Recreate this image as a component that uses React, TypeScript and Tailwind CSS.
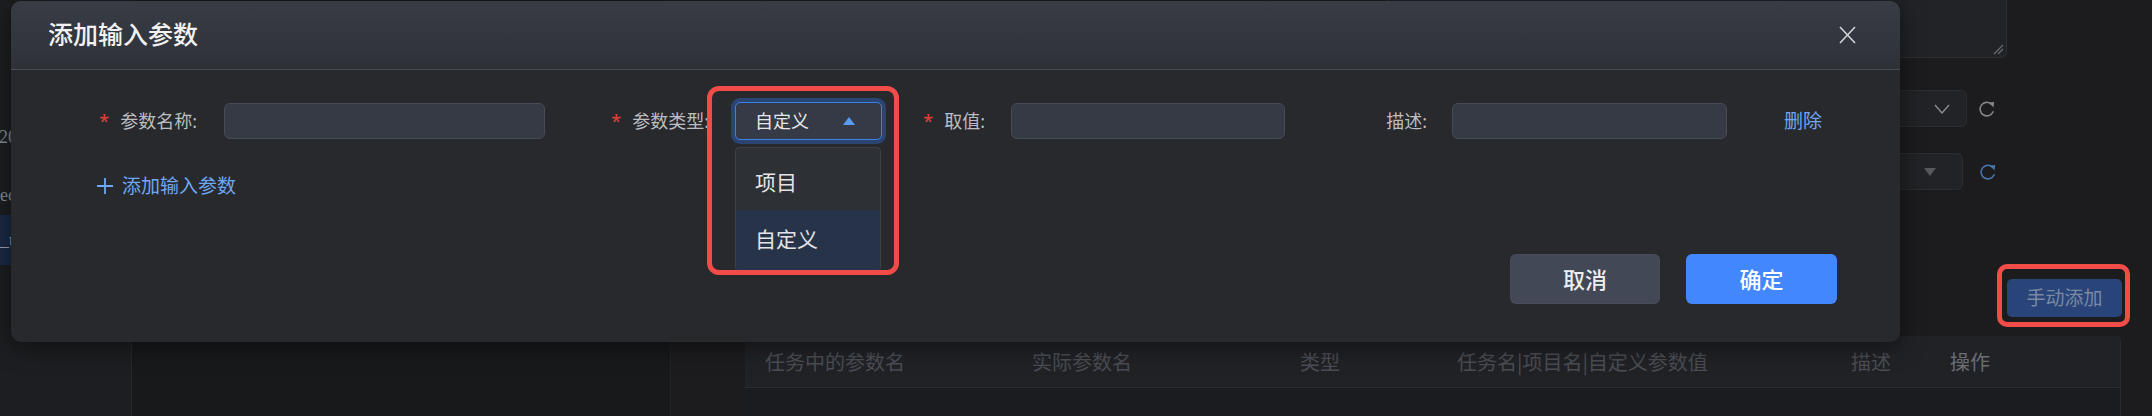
import React from 'react';

const font = "font-['Noto_Sans','Noto_Sans_CJK_SC',sans-serif]";

const Refresh: React.FC<{ color: string }> = ({ color }) => (
  <svg width="18" height="18" viewBox="0 0 16 16" fill="none">
    <path d="M13.4 10.4A6 6 0 1 1 11.9 3.6" stroke={color} strokeWidth="1.4" strokeLinecap="round" />
    <path d="M9.6 2.2L14.4 1.8L13.8 6.6Z" fill={color} />
  </svg>
);

const Label: React.FC<{ text: string; required?: boolean; className: string }> = ({ text, required, className }) => (
  <div className={`flex items-center justify-end text-[18px] text-[#bcbdc0] ${className}`}>
    {required && <span className="mr-[11px] text-[#e8403c]">*</span>}
    <span>{text}</span>
  </div>
);

const Field: React.FC<{ className: string }> = ({ className }) => (
  <div className={`h-[36px] rounded-[6px] border border-[#474b56] bg-[#363a45] ${className}`} />
);

export default function App() {
  return (
    <div className={`relative flex h-[416px] w-[2152px] overflow-hidden bg-[#1c1c1e] ${font}`}>
      {/* page behind the modal */}
      <aside className="flex w-[132px] shrink-0 flex-col border-r border-[#26272a] bg-[#1d1e21] font-['Liberation_Serif',serif] text-[18px] text-[#8a8b8f]">
        <div className="mt-[124px] h-[28px] -ml-[1px]">2023</div>
        <div className="mt-[30px] h-[28px]">edit</div>
        <div className="mt-[5px] flex h-[50px] items-center bg-[#1b2a44] text-[#9aa6ba]">_u</div>
      </aside>
      <div className="w-[539px] shrink-0 border-r border-[#222326] bg-[#18191b]" />
      <main className="flex flex-1 flex-col bg-[#1c1c1e]">
        <div className="flex justify-end pr-[145px]">
          <div className="flex w-[620px] flex-col">
            <div className="relative -mt-[12px] h-[70px] rounded-[6px] border border-[#2d2f33] bg-[#222327]">
              <svg className="absolute bottom-[2px] right-[2px]" width="12" height="12" viewBox="0 0 12 12">
                <path d="M2 11L11 2M6 11L11 6" stroke="#6a6b6f" strokeWidth="1.3" />
              </svg>
            </div>
            <div className="mt-[32px] flex h-[37px] items-center">
              <div className="flex h-full flex-1 items-center justify-end rounded-[6px] border border-[#2b2c30] bg-[#222326] pr-[16px]">
                <svg width="16" height="10" viewBox="0 0 16 10" fill="none">
                  <path d="M1 1L8 9L15 1" stroke="#8b8c90" strokeWidth="1.4" />
                </svg>
              </div>
              <div className="ml-[11px] mr-[11px] flex w-[18px] justify-center">
                <Refresh color="#85868a" />
              </div>
            </div>
            <div className="mt-[26px] flex h-[37px] items-center">
              <div className="flex h-full flex-1 items-center justify-end rounded-[6px] border border-[#2b2c30] bg-[#222326] pr-[26px]">
                <svg width="12" height="8" viewBox="0 0 12 8">
                  <path d="M0 0H12L6 8Z" fill="#58595d" />
                </svg>
              </div>
              <div className="ml-[16px] mr-[10px] flex w-[18px] justify-center">
                <Refresh color="#4b73aa" />
              </div>
            </div>
          </div>
        </div>

        <div className="mt-[89px] flex justify-end pr-[30px]">
          <div className="relative">
            <button className="h-[38px] w-[115px] rounded-[5px] bg-[#284479] text-[19px] text-[#7b89a3]">手动添加</button>
            <div className="pointer-events-none absolute -bottom-[10px] -left-[10px] -right-[8px] -top-[15px] rounded-[10px] border-[5px] border-[#f24c48]" />
          </div>
        </div>

        <div className="ml-[74px] mr-[31px] mt-[19px] flex-1 rounded-t-[6px] border-r border-[#2a2b2f] bg-[#1b1c1f]">
          <div className="grid h-[52px] grid-cols-[267px_268px_157px_394px_99px_1fr] items-center border-b border-[#2c2e33] bg-[#212226] font-['Noto_Sans_CJK_SC',sans-serif] text-[20px] text-[#4b4d54]">
            <div className="pl-[20px]">任务中的参数名</div>
            <div className="pl-[20px]">实际参数名</div>
            <div className="pl-[20px]">类型</div>
            <div className="pl-[20px]">任务名|项目名|自定义参数值</div>
            <div className="pl-[20px]">描述</div>
            <div className="pl-[20px] text-[#6b6d73]">操作</div>
          </div>
        </div>
      </main>

      {/* modal dialog */}
      <div className="absolute left-[11px] top-[1px] flex h-[341px] w-[1889px] flex-col rounded-[10px] bg-[#28292d] shadow-[0_4px_24px_rgba(0,0,0,0.5)]">
        <div className="flex h-[69px] items-center justify-between rounded-t-[10px] border-b border-[#454a55] bg-gradient-to-b from-[#383c45] to-[#2e3138] pl-[37px] pr-[44px]">
          <h2 className="text-[25px] font-medium text-[#f2f2f2]">添加输入参数</h2>
          <svg width="17" height="18" viewBox="0 0 17 18" fill="none">
            <path d="M1 1L16 17M16 1L1 17" stroke="#d4d4d6" strokeWidth="1.6" />
          </svg>
        </div>

        <div className="flex flex-1 flex-col pt-[32px]">
          <div className="flex h-[38px] items-center">
            <Label text="参数名称:" required className="w-[213px] pr-[27px]" />
            <Field className="w-[321px]" />
            <Label text="参数类型:" required className="w-[190px] pr-[26px]" />
            <div className="relative">
              <div className="flex h-[38px] w-[147px] items-center justify-between rounded-[5px] border border-[#3d80ea] bg-[#353a46] pl-[19px] pr-[26px] text-[18px] text-[#e6e6e8] shadow-[0_0_0_4px_#2b4573]">
                <span>自定义</span>
                <svg width="12" height="8" viewBox="0 0 12 8">
                  <path d="M6 0L12 8H0Z" fill="#5b9cf2" />
                </svg>
              </div>
              <div className="absolute left-0 top-[45px] flex h-[124px] w-[146px] flex-col overflow-hidden rounded-[4px] border border-[#3c3f47] bg-[#2d3035] text-[21px] text-[#e4e4e6]">
                <div className="flex h-[63px] items-center pl-[19px] pt-[8px]">项目</div>
                <div className="flex h-[61px] items-center bg-[#273349] pl-[19px]">自定义</div>
              </div>
              <div className="pointer-events-none absolute -left-[28px] -top-[16px] h-[189px] w-[192px] rounded-[12px] border-[5px] border-[#f24c48]" />
            </div>
            <Label text="取值:" required className="w-[129px] pr-[26px]" />
            <Field className="w-[274px]" />
            <Label text="描述:" className="w-[167px] pr-[25px]" />
            <Field className="w-[275px]" />
            <span className="ml-[57px] text-[19px] text-[#6ea7f5]">删除</span>
          </div>

          <div className="ml-[85px] mt-[34px] flex h-[24px] items-center text-[19px] text-[#6fa7f7]">
            <svg width="18" height="18" viewBox="0 0 18 18" fill="none">
              <path d="M9 1V17M1 9H17" stroke="#6fa7f7" strokeWidth="1.8" />
            </svg>
            <span className="ml-[8px]">添加输入参数</span>
          </div>

          <div className="mt-[56px] flex justify-end gap-[26px] pr-[63px]">
            <button className="h-[50px] w-[150px] rounded-[6px] border border-[#52566166] bg-[#434857] text-[22px] font-medium text-[#eeeef0]">取消</button>
            <button className="h-[50px] w-[151px] rounded-[6px] bg-[#4287fe] text-[22px] font-medium text-white">确定</button>
          </div>
        </div>
      </div>
    </div>
  );
}
